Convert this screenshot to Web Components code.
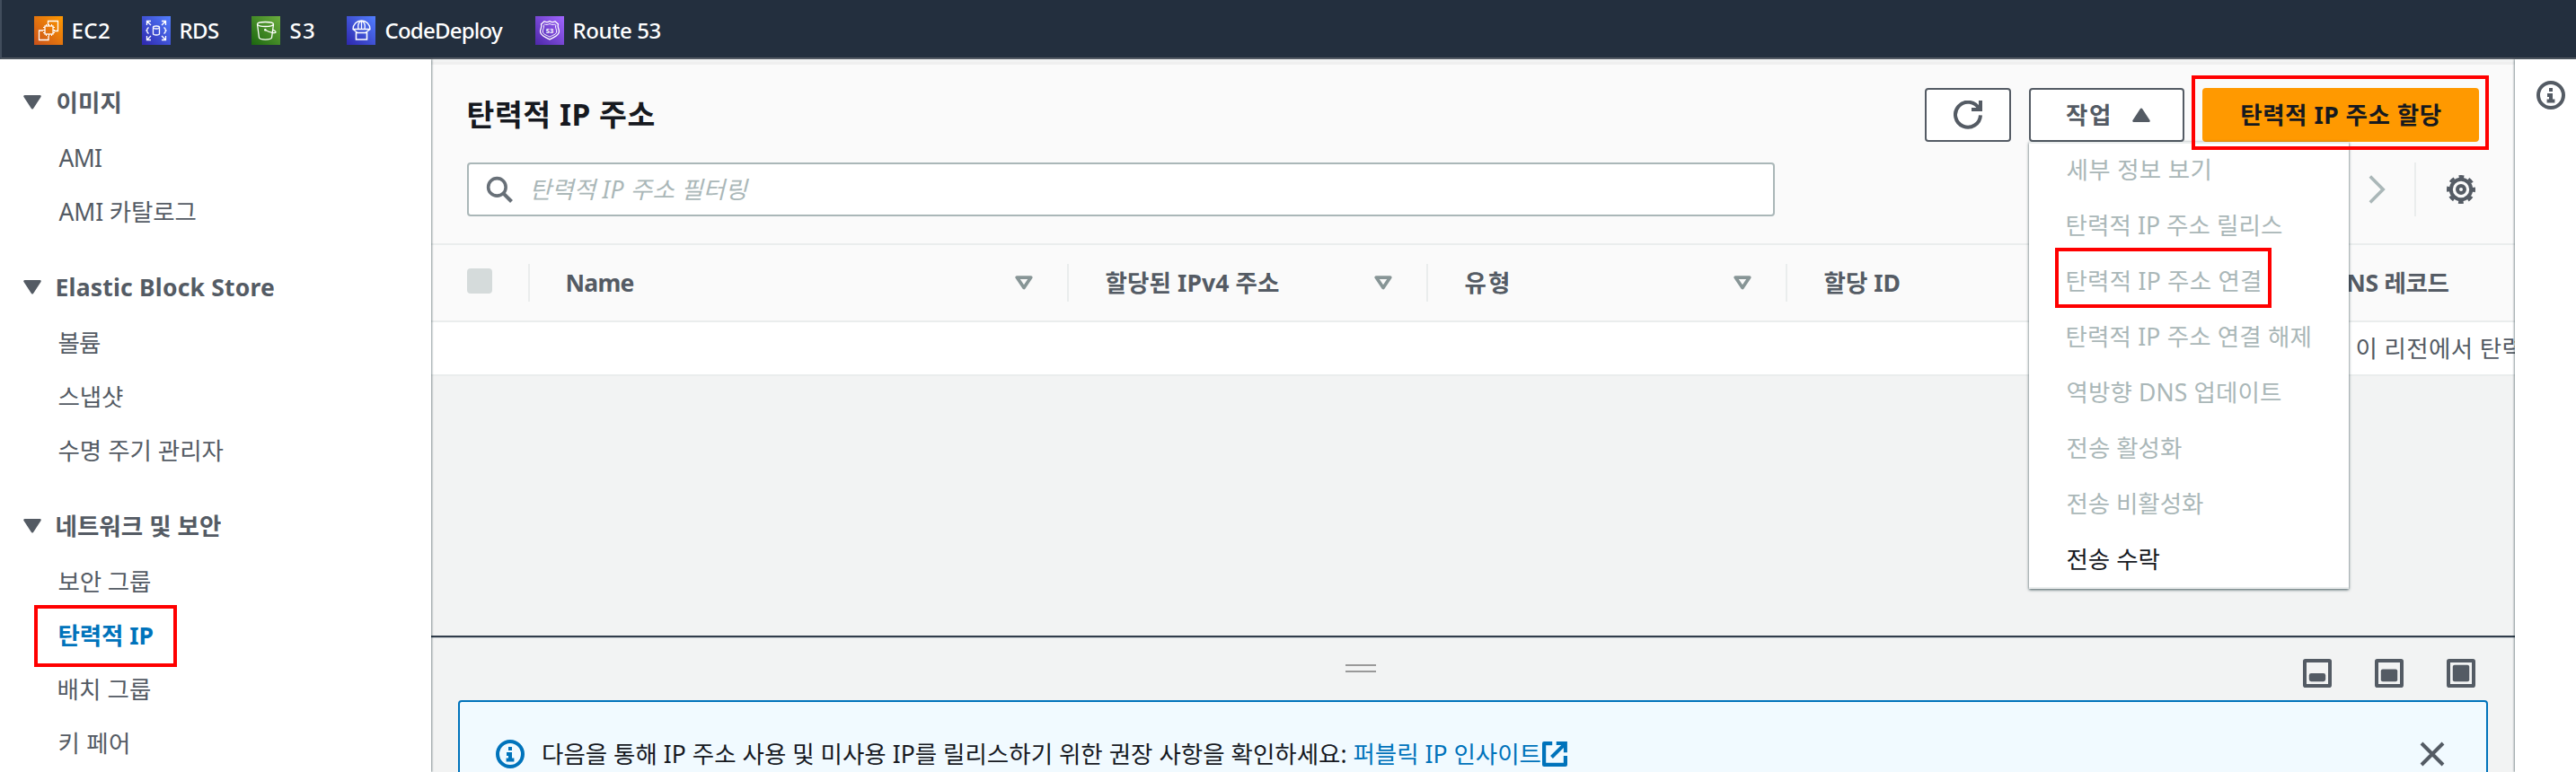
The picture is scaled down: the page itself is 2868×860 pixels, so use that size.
<!DOCTYPE html>
<html lang="ko">
<head>
<meta charset="utf-8">
<title>탄력적 IP 주소</title>
<style>
    html, body {
        margin: 0;
        height: 860px;
        overflow: hidden;
    }
    body {
        font-family: "Noto Sans", "Noto Sans CJK KR", sans-serif;
        font-size: 26.5px;
        color: #16191f;
        background: #fff;
    }
</style>
</head>
<body>
<ec2-console></ec2-console>

<script>
const icons = {
    search: '<circle cx="6.6" cy="6.6" r="5.2" stroke-width="1.9"/><path d="M10.2 10.2l5 5" stroke-width="2.2"/>',
    refresh: '<path d="M10 5h5V0"/><path d="M15 8.2A7 7 0 1 1 14.2 4.6"/>',
    info: '<circle cx="8" cy="8" r="7"/><path d="M8 12V8H6M5.8 11.2h4.4M8 6V4"/>',
    settings: '<circle cx="8" cy="8" r="5.6"/><circle cx="8" cy="8" r="7.2" stroke-width="1.6" stroke-dasharray="2.9 2.755" stroke-dashoffset="1.45"/><circle cx="8" cy="8" r="2"/>',
    next: '<path d="M4.4 .8l7.2 7.2-7.2 7.2" stroke-width="1.8"/>',
    close: '<path d="M2 2l12 12M14 2L2 14"/>',
    external: '<path d="M6.4 1.2H1.2v13.6h13.6V9.2" stroke-width="2.4" stroke-linejoin="round"/><path d="M9 1.2h5.8V7M14.4 1.6L6 10" stroke-width="2.3"/>',
    down: '<path d="M1.2 2.6h13.6L8 13z" fill="currentColor" stroke-linejoin="round"/>',
    up: '<path d="M1.2 13.4h13.6L8 3z" fill="currentColor" stroke-linejoin="round"/>',
    sort: '<path d="M1.8 3.2h12.4L8 12.4z" stroke-width="3" stroke-linejoin="round"/>',
    low: '<rect x="1" y="1" width="14" height="14" rx=".4"/><rect x="3.4" y="8" width="9.2" height="4.6" rx="1.2" fill="currentColor" stroke="none"/>',
    mid: '<rect x="1" y="1" width="14" height="14" rx=".4"/><rect x="3.4" y="5.7" width="9.2" height="6.9" rx="1" fill="currentColor" stroke="none"/>',
    full: '<rect x="1" y="1" width="14" height="14" rx=".4"/><rect x="3.4" y="3.4" width="9.2" height="9.2" rx="1" fill="currentColor" stroke="none"/>'
};

// service tiles: [dark corner, light corner, 32px drawing]
const services = {
    ec2: ['#c8511b', '#ff9900', '<path d="M10 16H5.5v10.5H16V22M15.5 10V5.5h11v11H22"/><rect x="12" y="11" width="9" height="9"/><path d="M13.5 9v2M16.5 9v2M19.5 9v2M13.5 20v2M16.5 20v2M19.5 20v2M10 12.5h2M10 15.5h2M10 18.5h2M21 12.5h2M21 15.5h2M21 18.5h2" stroke-width="1"/>'],
    rds: ['#2e27ad', '#527fff', '<path d="M5.5 10V5.5H10M6 6l4 4M22 5.5h4.5V10M26 6l-4 4M5.5 22v4.5H10M6 26l4-4M22 26.5h4.5V22M26 26l-4-4M7.5 12.5L6 14v1l-1 1 1 1v1l1.5 1.5M24.5 12.5L26 14v1l1 1-1 1v1l-1.5 1.5"/><ellipse cx="16" cy="12.5" rx="3.5" ry="1.5"/><path d="M12.5 12.5v7c0 2 7 2 7 0v-7"/>'],
    s3: ['#1b660f', '#6cae3e', '<ellipse cx="15.5" cy="9" rx="9" ry="2.5"/><path d="M6.5 9l2 15c1 2.7 13 2.7 14 0l2-15M15.5 15.5c5 3 11 4 11.5 2.5.2-1-1.5-2-3.3-2.8"/><circle cx="15.3" cy="15.3" r="1.3" fill="#fff" stroke="none"/>'],
    codedeploy: ['#2e27ad', '#527fff', '<path d="M7 14.5a9.5 9.5 0 0 1 19 0zM16.5 5v9.5M13 14.5C12 10 13 7 16.5 5M20 14.5c1-4.5 0-7.5-3.5-9.5M7 14.5l5 4M26 14.5l-5 4"/><path d="M10.5 18.5h12v7.5h-12z" stroke-width="1.6"/>'],
    route53: ['#4d27a8', '#a166ff', '<path d="M16 5.5c-2 1.5-4 1.5-6 .2L6.500 9c1.500 3-1 5-1 8 0 5 6 6 10.500 9 4.500-3 10.500-4 10.500-9 0-3-2.500-5-1-8L22 5.700c-2 1.300-4 1.300-6-.2z"/><path d="M16 8.500c-2 1-4 1.200-5.500.5L9.300 10.200c.8 2.800-1 4.300-1 6.800 0 3.600 4.500 4 7.700 6.200 3.200-2.200 7.700-2.600 7.700-6.200 0-2.500-1.800-4-1-6.800L21.500 9c-1.500.7-3.500.5-5.500-.5z" stroke-width="1"/><text x="16" y="18.6" text-anchor="middle" font-size="7.5" font-weight="700" fill="#fff" stroke="none">53</text>']
};

const measure = document.createElement('canvas').getContext('2d');

// Text whose visible ink spans exactly `w` pixels, set by tracking.
class FitText extends HTMLElement {
    constructor() {
        super();
        this.attachShadow({ mode: 'open' });
        this.shadowRoot.innerHTML = `
            <style>
                :host {
                    display: block;
                    flex: none;
                    line-height: 36px;
                    height: 36px;
                }
                span { display: block; width: max-content; white-space: pre; }
            </style>
            <span></span>
        `;
    }

    connectedCallback() {
        const span = this.shadowRoot.querySelector('span');
        const text = this.getAttribute('text');
        const w = parseFloat(this.getAttribute('w'));
        const cs = getComputedStyle(this);
        span.textContent = text;
        measure.font = `${cs.fontStyle} ${cs.fontWeight} ${cs.fontSize} ${cs.fontFamily}`;
        const m = measure.measureText(text);
        const ink = m.actualBoundingBoxRight + m.actualBoundingBoxLeft;
        span.style.letterSpacing = `${(w - ink) / (text.length - 1)}px`;
        span.style.marginLeft = `${m.actualBoundingBoxLeft + 0.5}px`;
        this.style.width = `${w}px`;
    }
}
customElements.define('fit-text', FitText);

class Ec2Icon extends HTMLElement {
    constructor() {
        super();
        this.attachShadow({ mode: 'open' });
    }

    connectedCallback() {
        const size = this.getAttribute('size') || 32;
        this.shadowRoot.innerHTML = `
            <style>
                :host { display: block; flex: none; width: ${size}px; height: ${size}px; }
                svg { display: block; }
            </style>
            <svg width="${size}" height="${size}" viewBox="0 0 16 16" fill="none" stroke="currentColor" stroke-width="2">${icons[this.getAttribute('name')]}</svg>
        `;
    }
}
customElements.define('ec2-icon', Ec2Icon);

class ServiceLink extends HTMLElement {
    constructor() {
        super();
        this.attachShadow({ mode: 'open' });
    }

    connectedCallback() {
        const [dark, light, art] = services[this.getAttribute('service')];
        this.shadowRoot.innerHTML = `
            <style>
                :host { display: flex; align-items: center; gap: 11px; }
                svg { display: block; background: linear-gradient(45deg, ${dark}, ${light}); }
            </style>
            <svg width="32" height="32" viewBox="0 0 32 32" fill="none" stroke="#fff" stroke-width="1.3">${art}</svg>
            <slot></slot>
        `;
    }
}
customElements.define('service-link', ServiceLink);

class FavoritesBar extends HTMLElement {
    constructor() {
        super();
        this.attachShadow({ mode: 'open' });
        this.shadowRoot.innerHTML = `
            <style>
                :host {
                    display: flex;
                    box-sizing: border-box;
                    align-items: center;
                    gap: 36.5px;
                    height: 66px;
                    padding: 4px 0 0 36px;
                    border-left: 2px solid #414d5c;
                    border-bottom: 2px solid #545b64;
                    background: #232f3e;
                    color: #fff;
                    font-size: 24px;
                    font-weight: 500;
                }
            </style>
            <service-link service="ec2"><fit-text w="40.5" text="EC2"></fit-text></service-link>
            <service-link service="rds"><fit-text w="42.5" text="RDS"></fit-text></service-link>
            <service-link service="s3"><fit-text w="26.5" text="S3"></fit-text></service-link>
            <service-link service="codedeploy"><fit-text w="130.5" text="CodeDeploy"></fit-text></service-link>
            <service-link service="route53"><fit-text w="96" text="Route 53"></fit-text></service-link>
        `;
    }
}
customElements.define('favorites-bar', FavoritesBar);

// Red outline drawn over whatever it wraps.
class HighlightBox extends HTMLElement {
    constructor() {
        super();
        this.attachShadow({ mode: 'open' });
        this.shadowRoot.innerHTML = `
            <style>
                :host { display: block; position: relative; flex: none; width: max-content; }
                div {
                    position: absolute;
                    inset: var(--inset);
                    border: 4px solid #f00;
                    z-index: 5;
                    pointer-events: none;
                }
            </style>
            <slot></slot>
            <div></div>
        `;
    }
}
customElements.define('highlight-box', HighlightBox);

class NavGroup extends HTMLElement {
    constructor() {
        super();
        this.attachShadow({ mode: 'open' });
        this.shadowRoot.innerHTML = `
            <style>
                :host { display: block; }
                header {
                    display: flex;
                    align-items: center;
                    gap: 17px;
                    height: 64px;
                    padding-left: 26px;
                    font-weight: 700;
                }
                .items ::slotted(*) {
                    display: flex;
                    align-items: center;
                    height: 60px;
                    margin-left: 65px;
                }
            </style>
            <header><ec2-icon name="down" size="20"></ec2-icon><slot name="title"></slot></header>
            <div class="items"><slot></slot></div>
        `;
    }
}
customElements.define('nav-group', NavGroup);

class SideNav extends HTMLElement {
    constructor() {
        super();
        this.attachShadow({ mode: 'open' });
        this.shadowRoot.innerHTML = `
            <style>
                :host {
                    display: flex;
                    flex-direction: column;
                    gap: 22px;
                    flex: none;
                    box-sizing: border-box;
                    width: 480px;
                    padding-top: 16px;
                    background: #fff;
                    color: #545b64;
                    box-shadow: 1px 0 2px rgba(0, 28, 36, .45);
                    z-index: 2;
                }
                [slot=title] { font-weight: 700; }
                .active { color: #0073bb; font-weight: 700; }
                highlight-box { --inset: -4px -27px -5px -27px; }
            </style>
            <nav-group>
                <fit-text slot="title" w="70" text="이미지"></fit-text>
                <div><fit-text w="47.5" text="AMI"></fit-text></div>
                <div><fit-text w="152" text="AMI 카탈로그"></fit-text></div>
            </nav-group>
            <nav-group>
                <fit-text slot="title" w="241.5" text="Elastic Block Store"></fit-text>
                <div><fit-text w="46.5" text="볼륨"></fit-text></div>
                <div><fit-text w="71.5" text="스냅샷"></fit-text></div>
                <div><fit-text w="183" text="수명 주기 관리자"></fit-text></div>
            </nav-group>
            <nav-group>
                <fit-text slot="title" w="182.5" text="네트워크 및 보안"></fit-text>
                <div><fit-text w="102.5" text="보안 그룹"></fit-text></div>
                <highlight-box class="active"><fit-text w="105" text="탄력적 IP"></fit-text></highlight-box>
                <div><fit-text w="102.5" text="배치 그룹"></fit-text></div>
                <div><fit-text w="77.5" text="키 페어"></fit-text></div>
            </nav-group>
        `;
    }
}
customElements.define('side-nav', SideNav);

class Ec2Button extends HTMLElement {
    constructor() {
        super();
        this.attachShadow({ mode: 'open' });
        this.shadowRoot.innerHTML = `
            <style>
                :host {
                    display: flex;
                    box-sizing: border-box;
                    align-items: center;
                    justify-content: center;
                    gap: 26px;
                    height: 60px;
                    border: 2px solid #545b64;
                    border-radius: 4px;
                    background: #fff;
                    color: #545b64;
                    font-weight: 700;
                }
                :host([primary]) {
                    border-color: #f90;
                    background: #f90;
                    color: #16191f;
                }
            </style>
            <slot></slot>
        `;
    }
}
customElements.define('ec2-button', Ec2Button);

class ActionMenu extends HTMLElement {
    constructor() {
        super();
        this.attachShadow({ mode: 'open' });
        this.shadowRoot.innerHTML = `
            <style>
                :host { display: block; position: relative; }
                ec2-button { width: 173px; padding-left: 2px; }
                .menu {
                    position: absolute;
                    top: 60px;
                    left: 0;
                    box-sizing: border-box;
                    width: 356px;
                    height: 498px;
                    background: #fff;
                    color: #aab7b8;
                    box-shadow: inset 0 2px #eaeded, inset 0 -2px #eaeded, 0 1px 3px rgba(0, 28, 36, .75);
                    z-index: 4;
                }
                .item { display: flex; align-items: center; height: 62px; padding-left: 42px; }
                .enabled { color: #16191f; }
                highlight-box { --inset: -19px -13px -12px -13px; }
            </style>
            <ec2-button><fit-text w="48" text="작업"></fit-text><ec2-icon name="up" size="20"></ec2-icon></ec2-button>
            <div class="menu">
                <div class="item"><fit-text w="158" text="세부 정보 보기"></fit-text></div>
                <div class="item"><fit-text w="239.5" text="탄력적 IP 주소 릴리스"></fit-text></div>
                <div class="item"><highlight-box><fit-text w="214.5" text="탄력적 IP 주소 연결"></fit-text></highlight-box></div>
                <div class="item"><fit-text w="270" text="탄력적 IP 주소 연결 해제"></fit-text></div>
                <div class="item"><fit-text w="238.5" text="역방향 DNS 업데이트"></fit-text></div>
                <div class="item"><fit-text w="127.5" text="전송 활성화"></fit-text></div>
                <div class="item"><fit-text w="151.5" text="전송 비활성화"></fit-text></div>
                <div class="item enabled"><fit-text w="103" text="전송 수락"></fit-text></div>
            </div>
        `;
    }
}
customElements.define('action-menu', ActionMenu);

class TableHeader extends HTMLElement {
    constructor() {
        super();
        this.attachShadow({ mode: 'open' });
        this.shadowRoot.innerHTML = `
            <style>
                :host {
                    display: block;
                    box-sizing: border-box;
                    height: 204px;
                    padding: 26px 40px 0;
                    border-top: 3px solid #efefef;
                    border-bottom: 2px solid #eaeded;
                    background: #fafafa;
                }
                .row { display: flex; align-items: center; height: 60px; }
                .row + .row { margin-top: 23px; }
                .title { font-size: 33.5px; font-weight: 700; margin: 0 auto 2px 1px; }
                .refresh { width: 96px; margin-right: 20px; }
                .create { width: 308px; }
                highlight-box { margin-left: 20px; --inset: -14px -11px -9px -12px; }
                .search {
                    display: flex;
                    box-sizing: border-box;
                    align-items: center;
                    gap: 22px;
                    width: 1456px;
                    height: 60px;
                    margin-right: auto;
                    padding-left: 19px;
                    border: 2px solid #aab7b8;
                    border-radius: 4px;
                    background: #fff;
                    color: #aab7b8;
                    font-style: italic;
                }
                .search ec2-icon { color: #687078; }
                .next { color: #aab7b8; margin-right: 26px; }
                .pref { border-left: 2px solid #eaeded; height: 60px; display: flex; align-items: center; padding: 0 4px 0 34px; color: #545b64; }
            </style>
            <div class="row">
                <fit-text class="title" w="207" text="탄력적 IP 주소"></fit-text>
                <ec2-button class="refresh"><ec2-icon name="refresh"></ec2-icon></ec2-button>
                <action-menu></action-menu>
                <highlight-box><ec2-button class="create" primary><fit-text w="222.5" text="탄력적 IP 주소 할당"></fit-text></ec2-button></highlight-box>
            </div>
            <div class="row">
                <div class="search"><ec2-icon name="search" size="30"></ec2-icon><fit-text w="241" text="탄력적 IP 주소 필터링"></fit-text></div>
                <ec2-icon class="next" name="next"></ec2-icon>
                <div class="pref"><ec2-icon name="settings"></ec2-icon></div>
            </div>
        `;
    }
}
customElements.define('table-header', TableHeader);

class AddressTable extends HTMLElement {
    constructor() {
        super();
        this.attachShadow({ mode: 'open' });
        this.shadowRoot.innerHTML = `
            <style>
                :host { display: block; }
                .head {
                    display: grid;
                    grid-template-columns: 110px 600px 400px 400px 485px 1fr;
                    align-items: center;
                    height: 84px;
                    border-bottom: 2px solid #eaeded;
                    background: #fafafa;
                    color: #545b64;
                    font-weight: 700;
                }
                .head > div {
                    display: flex;
                    box-sizing: border-box;
                    align-items: center;
                    justify-content: space-between;
                    height: 42px;
                    padding: 0 38px 0 41px;
                    border-right: 2px solid #eaeded;
                }
                .head > .check { padding-left: 40px; }
                .head > .last { border: 0; padding-left: 40px; }
                .check i { width: 28px; height: 28px; border-radius: 4px; background: #d5dbdb; margin-top: -4px; }
                .head ec2-icon { color: #879596; }
                .empty {
                    display: flex;
                    align-items: center;
                    height: 58px;
                    padding-left: 2144px;
                    overflow: hidden;
                    border-bottom: 2px solid #eaeded;
                    background: #fff;
                    color: #545b64;
                }
            </style>
            <div class="head">
                <div class="check"><i></i></div>
                <div><fit-text w="74" text="Name"></fit-text><ec2-icon name="sort" size="20"></ec2-icon></div>
                <div><fit-text w="192.5" text="할당된 IPv4 주소"></fit-text><ec2-icon name="sort" size="20"></ec2-icon></div>
                <div><fit-text w="47.5" text="유형"></fit-text><ec2-icon name="sort" size="20"></ec2-icon></div>
                <div><fit-text w="83" text="할당 ID"></fit-text></div>
                <div class="last"><fit-text w="211" text="역방향 DNS 레코드"></fit-text></div>
            </div>
            <div class="empty"><fit-text w="183" text="이 리전에서 탄력"></fit-text></div>
        `;
    }
}
customElements.define('address-table', AddressTable);

class SplitPanel extends HTMLElement {
    constructor() {
        super();
        this.attachShadow({ mode: 'open' });
        this.shadowRoot.innerHTML = `
            <style>
                :host {
                    display: block;
                    margin-top: auto;
                    height: 150px;
                    border-top: 2px solid #313d4b;
                    background: #f2f3f3;
                    box-shadow: inset 0 1px #cdd1d4;
                    overflow: hidden;
                }
                .tools {
                    display: grid;
                    grid-template-columns: 1018px 34px 1fr;
                    height: 70px;
                }
                .handle { height: 5px; margin-top: 30px; border: solid #999; border-width: 2px 0; }
                .positions {
                    display: flex;
                    gap: 48px;
                    justify-content: flex-end;
                    padding: 24px 44px 0 0;
                    color: #545b64;
                }
                .alert {
                    display: flex;
                    box-sizing: border-box;
                    align-items: center;
                    height: 120px;
                    margin: 0 30px;
                    padding: 0 48px 0 40px;
                    border: 2px solid #0073bb;
                    border-radius: 4px;
                    background: #f1faff;
                }
                .alert > fit-text { margin-left: 20.5px; }
                .info { color: #0073bb; }
                .alert > .link { margin-left: 9px; color: #0073bb; }
                .external { margin: 0 auto 0 2px; color: #0073bb; }
                .close { color: #545b64; margin-right: -4px; }
            </style>
            <div class="tools">
                <span></span>
                <div class="handle"></div>
                <div class="positions">
                    <ec2-icon name="low"></ec2-icon>
                    <ec2-icon name="mid"></ec2-icon>
                    <ec2-icon name="full"></ec2-icon>
                </div>
            </div>
            <div class="alert">
                <ec2-icon class="info" name="info"></ec2-icon>
                <fit-text w="893.5" text="다음을 통해 IP 주소 사용 및 미사용 IP를 릴리스하기 위한 권장 사항을 확인하세요:"></fit-text>
                <fit-text class="link" w="208" text="퍼블릭 IP 인사이트"></fit-text>
                <ec2-icon class="external" name="external" size="28"></ec2-icon>
                <ec2-icon class="close" name="close"></ec2-icon>
            </div>
        `;
    }
}
customElements.define('split-panel', SplitPanel);

class Ec2Console extends HTMLElement {
    constructor() {
        super();
        this.attachShadow({ mode: 'open' });
        this.shadowRoot.innerHTML = `
            <style>
                :host { display: flex; flex-direction: column; height: 860px; overflow: hidden; }
                .body { display: flex; flex: 1; min-height: 0; }
                main {
                    display: flex;
                    flex-direction: column;
                    width: 2320px;
                    padding-top: 3px;
                    box-sizing: border-box;
                    background: #f2f3f3;
                }
                aside {
                    display: flex;
                    flex: 1;
                    justify-content: flex-end;
                    padding: 24px 12px 0 0;
                    background: #fff;
                    color: #545b64;
                    box-shadow: -1px 0 2px rgba(0, 28, 36, .45);
                    z-index: 2;
                }
            </style>
            <favorites-bar></favorites-bar>
            <div class="body">
                <side-nav></side-nav>
                <main>
                    <table-header></table-header>
                    <address-table></address-table>
                    <split-panel></split-panel>
                </main>
                <aside><ec2-icon name="info"></ec2-icon></aside>
            </div>
        `;
    }
}
customElements.define('ec2-console', Ec2Console);
</script>
</body>
</html>
